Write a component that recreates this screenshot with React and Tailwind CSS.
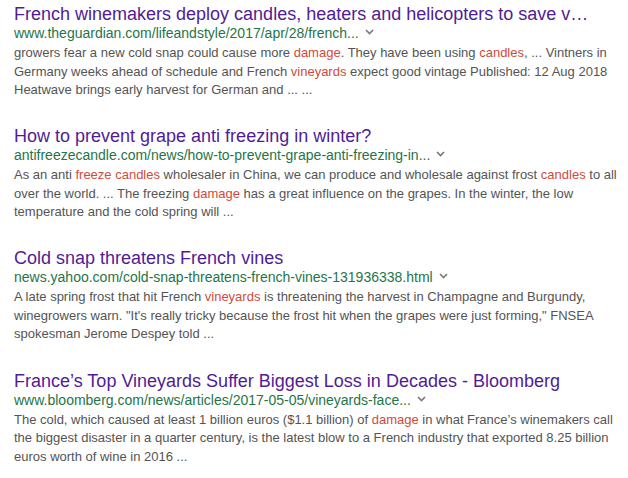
import React from "react";

const H = ({ children }) => <span className="text-[#d04b3b]">{children}</span>;

const Chevron = () => (
  <svg width="9" height="6" viewBox="0 0 9 6" className="ml-[6px] inline-block align-middle relative top-[-1px]">
    <path d="M1 1 L4.5 4.5 L8 1" fill="none" stroke="#777" strokeWidth="1.6" />
  </svg>
);

const results = [
  {
    title: "French winemakers deploy candles, heaters and helicopters to save v\u2026",
    url: "www.theguardian.com/lifeandstyle/2017/apr/28/french...",
    lines: [
      <>growers fear a new cold snap could cause more <H>damage</H>. They have been using <H>candles</H>, ... Vintners in</>,
      <>Germany weeks ahead of schedule and French <H>vineyards</H> expect good vintage Published: 12 Aug 2018</>,
      <>Heatwave brings early harvest for German and ... ...</>,
    ],
  },
  {
    title: "How to prevent grape anti freezing in winter?",
    url: "antifreezecandle.com/news/how-to-prevent-grape-anti-freezing-in...",
    lines: [
      <>As an anti <H>freeze candles</H> wholesaler in China, we can produce and wholesale against frost <H>candles</H> to all</>,
      <>over the world. ... The freezing <H>damage</H> has a great influence on the grapes. In the winter, the low</>,
      <>temperature and the cold spring will ...</>,
    ],
  },
  {
    title: "Cold snap threatens French vines",
    url: "news.yahoo.com/cold-snap-threatens-french-vines-131936338.html",
    lines: [
      <>A late spring frost that hit French <H>vineyards</H> is threatening the harvest in Champagne and Burgundy,</>,
      <>winegrowers warn. "It's really tricky because the frost hit when the grapes were just forming," FNSEA</>,
      <>spokesman Jerome Despey told ...</>,
    ],
  },
  {
    title: "France\u2019s Top Vineyards Suffer Biggest Loss in Decades - Bloomberg",
    url: "www.bloomberg.com/news/articles/2017-05-05/vineyards-face...",
    lines: [
      <>The cold, which caused at least 1 billion euros ($1.1 billion) of <H>damage</H> in what France{"\u2019"}s winemakers call</>,
      <>the biggest disaster in a quarter century, is the latest blow to a French industry that exported 8.25 billion</>,
      <>euros worth of wine in 2016 ...</>,
    ],
  },
];

export default function App() {
  return (
    <div
      className="w-[628px] h-[478px] bg-white overflow-hidden px-[14px] pt-[4px] flex flex-col gap-[26.7px]"
      style={{ fontFamily: '"Liberation Sans", Arial, sans-serif' }}
    >
      {results.map((r, i) => (
        <div key={i} className="flex flex-col">
          <div className="text-[18px] leading-[21px] text-[#4f1c96] whitespace-nowrap">{r.title}</div>
          <div className="text-[14px] leading-[16px] text-[#1f7548] whitespace-nowrap flex items-center">
            <span>{r.url}</span>
            <Chevron />
          </div>
          <div className="mt-[3px] text-[13px] leading-[18.5px] text-[#545454]">
            {r.lines.map((l, j) => (
              <div key={j} className="whitespace-nowrap">{l}</div>
            ))}
          </div>
        </div>
      ))}
    </div>
  );
}
